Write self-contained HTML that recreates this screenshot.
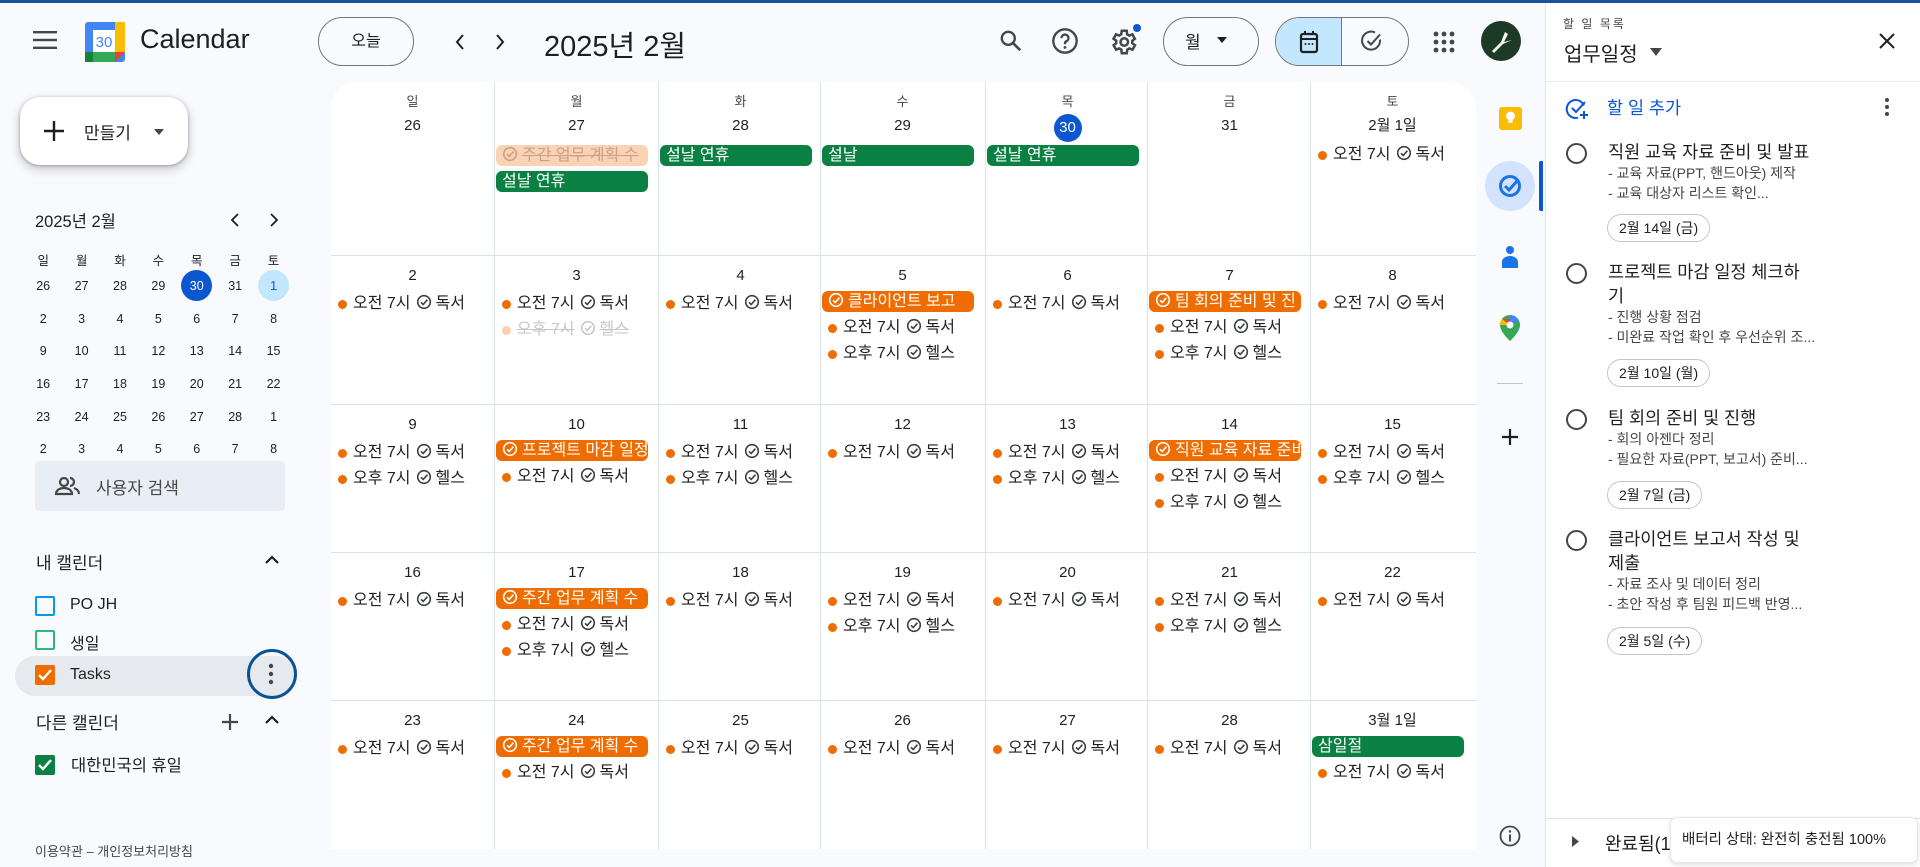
<!DOCTYPE html>
<html><head><meta charset="utf-8">
<style>
*{box-sizing:border-box;margin:0;padding:0}
body{width:1920px;height:867px;overflow:hidden;background:#f8fafd;font-family:"Liberation Sans","Noto Sans CJK KR",sans-serif;color:#1f1f1f;position:relative}
.a{position:absolute}
.topline{left:0;top:0;width:1920px;height:3px;background:#1d5199}
.grid{left:331px;top:82px;width:1145px;height:767px;background:#fff;border-top-left-radius:26px;border-top-right-radius:26px;overflow:hidden}
.vl{position:absolute;top:0;width:1px;height:767px;background:#dde3ea}
.hl{position:absolute;left:0;width:1145px;height:1px;background:#dde3ea}
.cell{position:absolute;width:163px;}
.dn{text-align:center;font-size:15px;height:24px;line-height:24px;color:#1f1f1f;margin-bottom:3px}
.wd{text-align:center;font-size:13px;color:#444746;height:20px;line-height:20px}
.ev{height:26px;line-height:26px;font-size:16px;padding-left:22px;position:relative;white-space:nowrap;color:#1f1f1f}
.ev .dot{position:absolute;left:7px;top:9px;width:9px;height:9px;border-radius:50%;background:#ef6c00}
.ck{width:16px;height:16px;vertical-align:-2px;margin:0 4px 0 5px;fill:none;stroke:#3c4043;stroke-width:1.6}
.ev.f{color:#c8c8c8;text-decoration:line-through}
.ev.f .dot{background:#f9d0b0}
.ev.f .ck{stroke:#c8c8c8}
.chip{height:21px;line-height:21px;margin:2px 10px 3px 1px;border-radius:6px;color:#fff;font-size:16px;padding-left:6px;white-space:nowrap;overflow:hidden}
.chip .ck{stroke:#fff;margin:0 4px 0 0}
.g{background:#0b8043}
.o{background:#ef6c00}
.fc{background:#fad2b4;color:#c9a189;text-decoration:line-through}
.fc .ck{stroke:#c9a189}
.today{display:inline-block;width:28px;height:28px;border-radius:50%;background:#0b57d0;color:#fff;line-height:28px}
.btn{border:1px solid #747775;border-radius:26px;background:transparent}
.task-t{font-size:17.5px;color:#1f1f1f;line-height:24px}
.task-s{font-size:14px;color:#444746;line-height:19.5px}
.tc{border:1px solid #c4c7c5;border-radius:14px;font-size:14px;color:#1f1f1f;height:28px;line-height:26px;padding:0 11px}
.circ{width:21px;height:21px;border:2px solid #444746;border-radius:50%}
</style></head><body>
<div class="a topline"></div>

<svg class="a" style="left:33px;top:31px" width="24" height="18" viewBox="0 0 24 18"><rect y="0" width="24" height="2.4" fill="#444746"/><rect y="7.8" width="24" height="2.4" fill="#444746"/><rect y="15.6" width="24" height="2.4" fill="#444746"/></svg>
<svg class="a" style="left:85px;top:22px" width="40" height="40" viewBox="0 0 40 40">
<rect x="0" y="0" width="40" height="40" rx="3" fill="#4285f4"/>
<rect x="30" y="0" width="10" height="30" fill="#fbbc04"/>
<rect x="0" y="30" width="30" height="10" fill="#34a853"/>
<rect x="0" y="30" width="8" height="10" fill="#188038"/>
<polygon points="30,30 40,30 30,40" fill="#ea4335"/>
<rect x="8" y="8" width="22" height="22" fill="#fff"/>
<text x="19" y="25" font-size="15" text-anchor="middle" fill="#4285f4" font-family="Liberation Sans">30</text></svg>
<div class="a" style="left:140px;top:24px;font-size:27px;color:#1f1f1f">Calendar</div>
<div class="a btn" style="left:318px;top:17px;width:96px;height:49px;text-align:center;line-height:47px;font-size:16px">오늘</div>
<svg class="a" style="left:453px;top:33px" width="14" height="18" viewBox="0 0 14 18"><path d="M10 2L4 9l6 7" fill="none" stroke="#1f1f1f" stroke-width="2"/></svg>
<svg class="a" style="left:493px;top:33px" width="14" height="18" viewBox="0 0 14 18"><path d="M4 2l6 7-6 7" fill="none" stroke="#1f1f1f" stroke-width="2"/></svg>
<div class="a" style="left:544px;top:23px;font-size:29px;color:#1f1f1f">2025년 2월</div>
<svg class="a" style="left:998px;top:28px" width="26" height="26" viewBox="0 0 24 24"><circle cx="9.5" cy="9.5" r="6" fill="none" stroke="#444746" stroke-width="2.2"/><path d="M14 14l6.5 6.5" stroke="#444746" stroke-width="2.4"/></svg>
<svg class="a" style="left:1051px;top:27px" width="28" height="28" viewBox="0 0 24 24"><circle cx="12" cy="12" r="10" fill="none" stroke="#444746" stroke-width="2"/><path d="M9 9.5a3 3 0 1 1 4 2.8c-.8.4-1 1-1 2v.5" fill="none" stroke="#444746" stroke-width="2"/><circle cx="12" cy="17.5" r="1.2" fill="#444746"/></svg>
<svg class="a" style="left:1108px;top:27px" width="30" height="30" viewBox="0 0 24 24"><path d="M19.4 13a7.5 7.5 0 0 0 0-2l2.1-1.6-2-3.5-2.5 1a7 7 0 0 0-1.7-1L15 3h-4l-.4 2.9a7 7 0 0 0-1.7 1l-2.5-1-2 3.5L6.6 11a7.5 7.5 0 0 0 0 2l-2.1 1.6 2 3.5 2.5-1a7 7 0 0 0 1.7 1L11 21h4l.4-2.9a7 7 0 0 0 1.7-1l2.5 1 2-3.5z" fill="none" stroke="#444746" stroke-width="2"/><circle cx="13" cy="12" r="3" fill="none" stroke="#444746" stroke-width="2"/></svg>
<div class="a" style="left:1133px;top:24px;width:8px;height:8px;border-radius:50%;background:#0b57d0"></div>
<div class="a btn" style="left:1163px;top:17px;width:96px;height:49px"></div>
<div class="a" style="left:1185px;top:28px;font-size:17px">월</div>
<svg class="a" style="left:1217px;top:37px" width="10" height="6"><path d="M0 0h10L5 6z" fill="#1f1f1f"/></svg>
<div class="a btn" style="left:1275px;top:17px;width:134px;height:49px;overflow:hidden"><div style="position:absolute;left:0;top:0;width:66px;height:49px;background:#c2e7ff;border-right:1px solid #747775"></div></div>
<svg class="a" style="left:1299px;top:30px" width="20" height="24" viewBox="0 0 20 24"><rect x="2" y="4" width="16" height="18" rx="2" fill="none" stroke="#1f1f1f" stroke-width="2.2"/><rect x="5" y="1" width="2" height="4" fill="#1f1f1f"/><rect x="13" y="1" width="2" height="4" fill="#1f1f1f"/><rect x="2" y="8" width="16" height="2" fill="#1f1f1f"/><circle cx="6.5" cy="14" r="1" fill="#1f1f1f"/><circle cx="10" cy="14" r="1" fill="#1f1f1f"/><circle cx="13.5" cy="14" r="1" fill="#1f1f1f"/></svg>
<svg class="a" style="left:1360px;top:29px" width="24" height="24" viewBox="0 0 24 24"><path d="M20 10.5A9 9 0 1 1 15 3.5" fill="none" stroke="#444746" stroke-width="2"/><path d="M7.5 12l3.5 3.5 9-10" fill="none" stroke="#444746" stroke-width="2"/></svg>
<svg class="a" style="left:1432px;top:30px" width="24" height="24" viewBox="0 0 24 24"><g fill="#444746"><circle cx="4" cy="4" r="2.4"/><circle cx="12" cy="4" r="2.4"/><circle cx="20" cy="4" r="2.4"/><circle cx="4" cy="12" r="2.4"/><circle cx="12" cy="12" r="2.4"/><circle cx="20" cy="12" r="2.4"/><circle cx="4" cy="20" r="2.4"/><circle cx="12" cy="20" r="2.4"/><circle cx="20" cy="20" r="2.4"/></g></svg>
<svg class="a" style="left:1481px;top:21px" width="40" height="40" viewBox="0 0 40 40"><circle cx="20" cy="20" r="20" fill="#1d3a26"/><path d="M11 30l9-9 4-10 3 2-4 8 8-2-9 4-9 9z" fill="#f4f4f0"/></svg>

<!-- left sidebar -->
<div class="a" style="left:20px;top:97px;width:168px;height:68px;background:#fff;border-radius:20px;box-shadow:0 1px 3px rgba(0,0,0,.3),0 4px 8px 3px rgba(0,0,0,.12)"></div>
<svg class="a" style="left:43px;top:120px" width="22" height="22"><path d="M11 1v20M1 11h20" stroke="#1f1f1f" stroke-width="2.4"/></svg>
<div class="a" style="left:84px;top:119px;font-size:17px">만들기</div>
<svg class="a" style="left:154px;top:129px" width="10" height="6"><path d="M0 0h10L5 6z" fill="#444746"/></svg>

<div class="a" style="left:35px;top:208px;font-size:16.5px">2025년 2월</div>
<svg class="a" style="left:230px;top:213px" width="10" height="14"><path d="M8 1L2 7l6 6" fill="none" stroke="#1f1f1f" stroke-width="1.8"/></svg>
<svg class="a" style="left:269px;top:213px" width="10" height="14"><path d="M2 1l6 6-6 6" fill="none" stroke="#1f1f1f" stroke-width="1.8"/></svg>
<div class="a" style="left:181px;top:270px;width:31px;height:31px;border-radius:50%;background:#0b57d0"></div>
<div class="a" style="left:258px;top:270px;width:31px;height:31px;border-radius:50%;background:#c2e7ff"></div>
<div class="a" style="left:24px;top:252px;line-height:0">
<div style="display:grid;grid-template-columns:repeat(7,38.4px);grid-template-rows:18px repeat(6,32.6px);font-size:12.5px;text-align:center;line-height:18px;align-items:center;color:#1f1f1f">
<span>일</span><span>월</span><span>화</span><span>수</span><span>목</span><span>금</span><span>토</span>
<span>26</span><span>27</span><span>28</span><span>29</span><span style="color:#fff">30</span><span>31</span><span style="color:#0b57d0">1</span>
<span>2</span><span>3</span><span>4</span><span>5</span><span>6</span><span>7</span><span>8</span>
<span>9</span><span>10</span><span>11</span><span>12</span><span>13</span><span>14</span><span>15</span>
<span>16</span><span>17</span><span>18</span><span>19</span><span>20</span><span>21</span><span>22</span>
<span>23</span><span>24</span><span>25</span><span>26</span><span>27</span><span>28</span><span>1</span>
<span>2</span><span>3</span><span>4</span><span>5</span><span>6</span><span>7</span><span>8</span>
</div></div>
<div class="a" style="left:35px;top:461px;width:250px;height:50px;background:#e9eef6;border-radius:4px"></div>
<svg class="a" style="left:55px;top:476px" width="26" height="20" viewBox="0 0 26 20"><circle cx="9" cy="6" r="4" fill="none" stroke="#444746" stroke-width="2.2"/><path d="M1 18c0-4 4-6 8-6s8 2 8 6z" fill="none" stroke="#444746" stroke-width="2.2"/><path d="M15 2a4 4 0 0 1 0 8M19 12c3 1 5 3 5 6" fill="none" stroke="#444746" stroke-width="2.2"/></svg>
<div class="a" style="left:96px;top:474px;font-size:17px;color:#444746">사용자 검색</div>

<div class="a" style="left:36px;top:549px;font-size:17px">내 캘린더</div>
<svg class="a" style="left:264px;top:554px" width="16" height="10"><path d="M2 9l6-6 6 6" fill="none" stroke="#1f1f1f" stroke-width="2.2"/></svg>
<div class="a" style="left:35px;top:596px;width:20px;height:20px;border:2px solid #039be5;border-radius:2px"></div>
<div class="a" style="left:70px;top:596px;font-size:16px">PO JH</div>
<div class="a" style="left:35px;top:630px;width:20px;height:20px;border:2px solid #33b679;border-radius:2px"></div>
<div class="a" style="left:70px;top:630px;font-size:16px">생일</div>
<div class="a" style="left:15px;top:656px;width:282px;height:40px;background:#e6e9ee;border-radius:20px"></div>
<div class="a" style="left:35px;top:665px;width:20px;height:20px;background:#ef6c00;border-radius:2px"></div>
<svg class="a" style="left:37px;top:668px" width="16" height="14"><path d="M2 7l4 4 8-9" fill="none" stroke="#fff" stroke-width="2.4"/></svg>
<div class="a" style="left:70px;top:666px;font-size:16px">Tasks</div>
<div class="a" style="left:247px;top:649px;width:50px;height:50px;border:3px solid #0b5394;border-radius:50%"></div>
<svg class="a" style="left:268px;top:663px" width="6" height="22"><circle cx="3" cy="3" r="2.2" fill="#444746"/><circle cx="3" cy="11" r="2.2" fill="#444746"/><circle cx="3" cy="19" r="2.2" fill="#444746"/></svg>
<div class="a" style="left:36px;top:709px;font-size:17px">다른 캘린더</div>
<svg class="a" style="left:221px;top:713px" width="18" height="18"><path d="M9 1v16M1 9h16" stroke="#444746" stroke-width="2.2"/></svg>
<svg class="a" style="left:264px;top:714px" width="16" height="10"><path d="M2 9l6-6 6 6" fill="none" stroke="#1f1f1f" stroke-width="2.2"/></svg>
<div class="a" style="left:35px;top:755px;width:20px;height:20px;background:#0b8043;border-radius:2px"></div>
<svg class="a" style="left:37px;top:758px" width="16" height="14"><path d="M2 7l4 4 8-9" fill="none" stroke="#fff" stroke-width="2.4"/></svg>
<div class="a" style="left:71px;top:752px;font-size:16.5px">대한민국의 휴일</div>
<div class="a" style="left:35px;top:841px;font-size:13px;color:#444746">이용약관 – 개인정보처리방침</div>

<!-- grid -->
<div class="a grid">
<div class="vl" style="left:163px"></div><div class="vl" style="left:327px"></div><div class="vl" style="left:489px"></div><div class="vl" style="left:654px"></div><div class="vl" style="left:816px"></div><div class="vl" style="left:979px"></div>
<div class="hl" style="top:173px"></div><div class="hl" style="top:322px"></div><div class="hl" style="top:470px"></div><div class="hl" style="top:618px"></div>

<!-- row1 -->
<div class="cell" style="left:0;top:10px"><div class="wd">일</div><div class="dn" style="margin-top:2px">26</div></div>
<div class="cell" style="left:164px;top:10px"><div class="wd">월</div><div class="dn" style="margin-top:2px;margin-bottom:0">27</div>
<div class="chip fc" style="margin-top:7px"><svg class="ck" viewBox="0 0 16 16"><circle cx="8" cy="8" r="6.3"/><path d="M5 8.3l2.2 2.2 4.2-4.8"/></svg>주간 업무 계획 수</div>
<div class="chip g" style="margin-top:5px">설날 연휴</div></div>
<div class="cell" style="left:328px;top:10px"><div class="wd">화</div><div class="dn" style="margin-top:2px;margin-bottom:0">28</div>
<div class="chip g" style="margin-top:7px">설날 연휴</div></div>
<div class="cell" style="left:490px;top:10px"><div class="wd">수</div><div class="dn" style="margin-top:2px;margin-bottom:0">29</div>
<div class="chip g" style="margin-top:7px">설날</div></div>
<div class="cell" style="left:655px;top:10px"><div class="wd">목</div><div class="dn" style="margin-top:2px;margin-bottom:0"><span class="today">30</span></div>
<div class="chip g" style="margin-top:7px">설날 연휴</div></div>
<div class="cell" style="left:817px;top:10px"><div class="wd">금</div><div class="dn" style="margin-top:2px">31</div></div>
<div class="cell" style="left:980px;top:10px"><div class="wd">토</div><div class="dn" style="margin-top:2px;margin-bottom:0">2월 1일</div>
<div class="ev" style="margin-top:4px"><i class="dot"></i>오전 7시<svg class="ck" viewBox="0 0 16 16"><circle cx="8" cy="8" r="6.3"/><path d="M5 8.3l2.2 2.2 4.2-4.8"/></svg>독서</div></div>

<!-- row2 -->
<div class="cell" style="left:0;top:182px"><div class="dn">2</div><div class="ev"><i class="dot"></i>오전 7시<svg class="ck" viewBox="0 0 16 16"><circle cx="8" cy="8" r="6.3"/><path d="M5 8.3l2.2 2.2 4.2-4.8"/></svg>독서</div></div>
<div class="cell" style="left:164px;top:182px"><div class="dn">3</div><div class="ev"><i class="dot"></i>오전 7시<svg class="ck" viewBox="0 0 16 16"><circle cx="8" cy="8" r="6.3"/><path d="M5 8.3l2.2 2.2 4.2-4.8"/></svg>독서</div><div class="ev f"><i class="dot"></i>오후 7시<svg class="ck" viewBox="0 0 16 16"><circle cx="8" cy="8" r="6.3"/><path d="M5 8.3l2.2 2.2 4.2-4.8"/></svg>헬스</div></div>
<div class="cell" style="left:328px;top:182px"><div class="dn">4</div><div class="ev"><i class="dot"></i>오전 7시<svg class="ck" viewBox="0 0 16 16"><circle cx="8" cy="8" r="6.3"/><path d="M5 8.3l2.2 2.2 4.2-4.8"/></svg>독서</div></div>
<div class="cell" style="left:490px;top:182px"><div class="dn">5</div><div class="chip o"><svg class="ck" viewBox="0 0 16 16"><circle cx="8" cy="8" r="6.3"/><path d="M5 8.3l2.2 2.2 4.2-4.8"/></svg>클라이언트 보고</div><div class="ev"><i class="dot"></i>오전 7시<svg class="ck" viewBox="0 0 16 16"><circle cx="8" cy="8" r="6.3"/><path d="M5 8.3l2.2 2.2 4.2-4.8"/></svg>독서</div><div class="ev"><i class="dot"></i>오후 7시<svg class="ck" viewBox="0 0 16 16"><circle cx="8" cy="8" r="6.3"/><path d="M5 8.3l2.2 2.2 4.2-4.8"/></svg>헬스</div></div>
<div class="cell" style="left:655px;top:182px"><div class="dn">6</div><div class="ev"><i class="dot"></i>오전 7시<svg class="ck" viewBox="0 0 16 16"><circle cx="8" cy="8" r="6.3"/><path d="M5 8.3l2.2 2.2 4.2-4.8"/></svg>독서</div></div>
<div class="cell" style="left:817px;top:182px"><div class="dn">7</div><div class="chip o"><svg class="ck" viewBox="0 0 16 16"><circle cx="8" cy="8" r="6.3"/><path d="M5 8.3l2.2 2.2 4.2-4.8"/></svg>팀 회의 준비 및 진</div><div class="ev"><i class="dot"></i>오전 7시<svg class="ck" viewBox="0 0 16 16"><circle cx="8" cy="8" r="6.3"/><path d="M5 8.3l2.2 2.2 4.2-4.8"/></svg>독서</div><div class="ev"><i class="dot"></i>오후 7시<svg class="ck" viewBox="0 0 16 16"><circle cx="8" cy="8" r="6.3"/><path d="M5 8.3l2.2 2.2 4.2-4.8"/></svg>헬스</div></div>
<div class="cell" style="left:980px;top:182px"><div class="dn">8</div><div class="ev"><i class="dot"></i>오전 7시<svg class="ck" viewBox="0 0 16 16"><circle cx="8" cy="8" r="6.3"/><path d="M5 8.3l2.2 2.2 4.2-4.8"/></svg>독서</div></div>

<!-- row3 -->
<div class="cell" style="left:0;top:331px"><div class="dn">9</div><div class="ev"><i class="dot"></i>오전 7시<svg class="ck" viewBox="0 0 16 16"><circle cx="8" cy="8" r="6.3"/><path d="M5 8.3l2.2 2.2 4.2-4.8"/></svg>독서</div><div class="ev"><i class="dot"></i>오후 7시<svg class="ck" viewBox="0 0 16 16"><circle cx="8" cy="8" r="6.3"/><path d="M5 8.3l2.2 2.2 4.2-4.8"/></svg>헬스</div></div>
<div class="cell" style="left:164px;top:331px"><div class="dn">10</div><div class="chip o"><svg class="ck" viewBox="0 0 16 16"><circle cx="8" cy="8" r="6.3"/><path d="M5 8.3l2.2 2.2 4.2-4.8"/></svg>프로젝트 마감 일정</div><div class="ev"><i class="dot"></i>오전 7시<svg class="ck" viewBox="0 0 16 16"><circle cx="8" cy="8" r="6.3"/><path d="M5 8.3l2.2 2.2 4.2-4.8"/></svg>독서</div></div>
<div class="cell" style="left:328px;top:331px"><div class="dn">11</div><div class="ev"><i class="dot"></i>오전 7시<svg class="ck" viewBox="0 0 16 16"><circle cx="8" cy="8" r="6.3"/><path d="M5 8.3l2.2 2.2 4.2-4.8"/></svg>독서</div><div class="ev"><i class="dot"></i>오후 7시<svg class="ck" viewBox="0 0 16 16"><circle cx="8" cy="8" r="6.3"/><path d="M5 8.3l2.2 2.2 4.2-4.8"/></svg>헬스</div></div>
<div class="cell" style="left:490px;top:331px"><div class="dn">12</div><div class="ev"><i class="dot"></i>오전 7시<svg class="ck" viewBox="0 0 16 16"><circle cx="8" cy="8" r="6.3"/><path d="M5 8.3l2.2 2.2 4.2-4.8"/></svg>독서</div></div>
<div class="cell" style="left:655px;top:331px"><div class="dn">13</div><div class="ev"><i class="dot"></i>오전 7시<svg class="ck" viewBox="0 0 16 16"><circle cx="8" cy="8" r="6.3"/><path d="M5 8.3l2.2 2.2 4.2-4.8"/></svg>독서</div><div class="ev"><i class="dot"></i>오후 7시<svg class="ck" viewBox="0 0 16 16"><circle cx="8" cy="8" r="6.3"/><path d="M5 8.3l2.2 2.2 4.2-4.8"/></svg>헬스</div></div>
<div class="cell" style="left:817px;top:331px"><div class="dn">14</div><div class="chip o"><svg class="ck" viewBox="0 0 16 16"><circle cx="8" cy="8" r="6.3"/><path d="M5 8.3l2.2 2.2 4.2-4.8"/></svg>직원 교육 자료 준비</div><div class="ev"><i class="dot"></i>오전 7시<svg class="ck" viewBox="0 0 16 16"><circle cx="8" cy="8" r="6.3"/><path d="M5 8.3l2.2 2.2 4.2-4.8"/></svg>독서</div><div class="ev"><i class="dot"></i>오후 7시<svg class="ck" viewBox="0 0 16 16"><circle cx="8" cy="8" r="6.3"/><path d="M5 8.3l2.2 2.2 4.2-4.8"/></svg>헬스</div></div>
<div class="cell" style="left:980px;top:331px"><div class="dn">15</div><div class="ev"><i class="dot"></i>오전 7시<svg class="ck" viewBox="0 0 16 16"><circle cx="8" cy="8" r="6.3"/><path d="M5 8.3l2.2 2.2 4.2-4.8"/></svg>독서</div><div class="ev"><i class="dot"></i>오후 7시<svg class="ck" viewBox="0 0 16 16"><circle cx="8" cy="8" r="6.3"/><path d="M5 8.3l2.2 2.2 4.2-4.8"/></svg>헬스</div></div>

<!-- row4 -->
<div class="cell" style="left:0;top:479px"><div class="dn">16</div><div class="ev"><i class="dot"></i>오전 7시<svg class="ck" viewBox="0 0 16 16"><circle cx="8" cy="8" r="6.3"/><path d="M5 8.3l2.2 2.2 4.2-4.8"/></svg>독서</div></div>
<div class="cell" style="left:164px;top:479px"><div class="dn">17</div><div class="chip o"><svg class="ck" viewBox="0 0 16 16"><circle cx="8" cy="8" r="6.3"/><path d="M5 8.3l2.2 2.2 4.2-4.8"/></svg>주간 업무 계획 수</div><div class="ev"><i class="dot"></i>오전 7시<svg class="ck" viewBox="0 0 16 16"><circle cx="8" cy="8" r="6.3"/><path d="M5 8.3l2.2 2.2 4.2-4.8"/></svg>독서</div><div class="ev"><i class="dot"></i>오후 7시<svg class="ck" viewBox="0 0 16 16"><circle cx="8" cy="8" r="6.3"/><path d="M5 8.3l2.2 2.2 4.2-4.8"/></svg>헬스</div></div>
<div class="cell" style="left:328px;top:479px"><div class="dn">18</div><div class="ev"><i class="dot"></i>오전 7시<svg class="ck" viewBox="0 0 16 16"><circle cx="8" cy="8" r="6.3"/><path d="M5 8.3l2.2 2.2 4.2-4.8"/></svg>독서</div></div>
<div class="cell" style="left:490px;top:479px"><div class="dn">19</div><div class="ev"><i class="dot"></i>오전 7시<svg class="ck" viewBox="0 0 16 16"><circle cx="8" cy="8" r="6.3"/><path d="M5 8.3l2.2 2.2 4.2-4.8"/></svg>독서</div><div class="ev"><i class="dot"></i>오후 7시<svg class="ck" viewBox="0 0 16 16"><circle cx="8" cy="8" r="6.3"/><path d="M5 8.3l2.2 2.2 4.2-4.8"/></svg>헬스</div></div>
<div class="cell" style="left:655px;top:479px"><div class="dn">20</div><div class="ev"><i class="dot"></i>오전 7시<svg class="ck" viewBox="0 0 16 16"><circle cx="8" cy="8" r="6.3"/><path d="M5 8.3l2.2 2.2 4.2-4.8"/></svg>독서</div></div>
<div class="cell" style="left:817px;top:479px"><div class="dn">21</div><div class="ev"><i class="dot"></i>오전 7시<svg class="ck" viewBox="0 0 16 16"><circle cx="8" cy="8" r="6.3"/><path d="M5 8.3l2.2 2.2 4.2-4.8"/></svg>독서</div><div class="ev"><i class="dot"></i>오후 7시<svg class="ck" viewBox="0 0 16 16"><circle cx="8" cy="8" r="6.3"/><path d="M5 8.3l2.2 2.2 4.2-4.8"/></svg>헬스</div></div>
<div class="cell" style="left:980px;top:479px"><div class="dn">22</div><div class="ev"><i class="dot"></i>오전 7시<svg class="ck" viewBox="0 0 16 16"><circle cx="8" cy="8" r="6.3"/><path d="M5 8.3l2.2 2.2 4.2-4.8"/></svg>독서</div></div>

<!-- row5 -->
<div class="cell" style="left:0;top:627px"><div class="dn">23</div><div class="ev"><i class="dot"></i>오전 7시<svg class="ck" viewBox="0 0 16 16"><circle cx="8" cy="8" r="6.3"/><path d="M5 8.3l2.2 2.2 4.2-4.8"/></svg>독서</div></div>
<div class="cell" style="left:164px;top:627px"><div class="dn">24</div><div class="chip o"><svg class="ck" viewBox="0 0 16 16"><circle cx="8" cy="8" r="6.3"/><path d="M5 8.3l2.2 2.2 4.2-4.8"/></svg>주간 업무 계획 수</div><div class="ev"><i class="dot"></i>오전 7시<svg class="ck" viewBox="0 0 16 16"><circle cx="8" cy="8" r="6.3"/><path d="M5 8.3l2.2 2.2 4.2-4.8"/></svg>독서</div></div>
<div class="cell" style="left:328px;top:627px"><div class="dn">25</div><div class="ev"><i class="dot"></i>오전 7시<svg class="ck" viewBox="0 0 16 16"><circle cx="8" cy="8" r="6.3"/><path d="M5 8.3l2.2 2.2 4.2-4.8"/></svg>독서</div></div>
<div class="cell" style="left:490px;top:627px"><div class="dn">26</div><div class="ev"><i class="dot"></i>오전 7시<svg class="ck" viewBox="0 0 16 16"><circle cx="8" cy="8" r="6.3"/><path d="M5 8.3l2.2 2.2 4.2-4.8"/></svg>독서</div></div>
<div class="cell" style="left:655px;top:627px"><div class="dn">27</div><div class="ev"><i class="dot"></i>오전 7시<svg class="ck" viewBox="0 0 16 16"><circle cx="8" cy="8" r="6.3"/><path d="M5 8.3l2.2 2.2 4.2-4.8"/></svg>독서</div></div>
<div class="cell" style="left:817px;top:627px"><div class="dn">28</div><div class="ev"><i class="dot"></i>오전 7시<svg class="ck" viewBox="0 0 16 16"><circle cx="8" cy="8" r="6.3"/><path d="M5 8.3l2.2 2.2 4.2-4.8"/></svg>독서</div></div>
<div class="cell" style="left:980px;top:627px"><div class="dn">3월 1일</div><div class="chip g">삼일절</div><div class="ev"><i class="dot"></i>오전 7시<svg class="ck" viewBox="0 0 16 16"><circle cx="8" cy="8" r="6.3"/><path d="M5 8.3l2.2 2.2 4.2-4.8"/></svg>독서</div></div>
</div>

<!-- side icon rail -->
<div class="a" style="left:1499px;top:107px;width:23px;height:23px;background:#fbbc04;border-radius:3px"></div>
<svg class="a" style="left:1504px;top:110px" width="13" height="17" viewBox="0 0 13 17"><circle cx="6.5" cy="6" r="4.5" fill="#fff"/><rect x="4.5" y="10" width="4" height="3" fill="#fff"/></svg>
<div class="a" style="left:1485px;top:161px;width:50px;height:50px;border-radius:50%;background:#d3e3fd"></div>
<svg class="a" style="left:1498px;top:174px" width="24" height="24" viewBox="0 0 24 24"><circle cx="12" cy="12" r="9.5" fill="none" stroke="#1a73e8" stroke-width="3"/><path d="M7 12l4 4 9-10" fill="none" stroke="#1a73e8" stroke-width="3"/></svg>
<div class="a" style="left:1539px;top:161px;width:4px;height:50px;background:#0b57d0;border-radius:2px 0 0 2px"></div>
<svg class="a" style="left:1501px;top:245px" width="18" height="24" viewBox="0 0 18 24"><circle cx="9" cy="5" r="4" fill="#1a73e8"/><path d="M1 23v-6a8 6 0 0 1 16 0v6z" fill="#1a73e8"/></svg>
<svg class="a" style="left:1499px;top:314px" width="22" height="28" viewBox="0 0 22 28"><path d="M11 1a10 10 0 0 0-10 10c0 7 10 16 10 16s10-9 10-16A10 10 0 0 0 11 1z" fill="#34a853"/><path d="M3 5l8 6 8-6" fill="#ea4335"/><path d="M11 1a10 10 0 0 1 9 6l-9 4z" fill="#4285f4"/><path d="M1 11a10 10 0 0 1 2-6l8 6z" fill="#fbbc04"/><circle cx="11" cy="11" r="3.5" fill="#fff"/></svg>
<div class="a" style="left:1497px;top:383px;width:26px;height:1px;background:#c4c7c5"></div>
<svg class="a" style="left:1501px;top:428px" width="18" height="18"><path d="M9 1v16M1 9h16" stroke="#1f1f1f" stroke-width="2.2"/></svg>
<svg class="a" style="left:1499px;top:825px" width="22" height="22" viewBox="0 0 22 22"><circle cx="11" cy="11" r="9.5" fill="none" stroke="#444746" stroke-width="1.8"/><rect x="10" y="9.5" width="2" height="7" fill="#444746"/><circle cx="11" cy="6.5" r="1.2" fill="#444746"/></svg>

<!-- right panel -->
<div class="a" style="left:1545px;top:3px;width:375px;height:864px;background:#fff;border-left:1px solid #e3e3e3"></div>
<div class="a" style="left:1563px;top:15px;font-size:12px;color:#444746;letter-spacing:2px">할 일 목록</div>
<div class="a" style="left:1564px;top:38px;font-size:20px">업무일정</div>
<svg class="a" style="left:1650px;top:48px" width="12" height="8"><path d="M0 0h12L6 8z" fill="#444746"/></svg>
<svg class="a" style="left:1878px;top:32px" width="18" height="18"><path d="M2 2l14 14M16 2L2 16" stroke="#1f1f1f" stroke-width="2"/></svg>
<div class="a" style="left:1545px;top:81px;width:375px;height:1px;background:#e8eaed"></div>
<svg class="a" style="left:1565px;top:97px" width="24" height="24" viewBox="0 0 24 24"><path d="M19 8.5A9 9 0 1 0 13 20.7" fill="none" stroke="#0b57d0" stroke-width="2"/><path d="M7 11l4 4 9-10" fill="none" stroke="#0b57d0" stroke-width="2"/><path d="M19 14v8M15 18h8" stroke="#0b57d0" stroke-width="2"/></svg>
<div class="a" style="left:1607px;top:95px;font-size:17.5px;color:#0b57d0">할 일 추가</div>
<svg class="a" style="left:1884px;top:97px" width="6" height="20"><circle cx="3" cy="3" r="2" fill="#444746"/><circle cx="3" cy="10" r="2" fill="#444746"/><circle cx="3" cy="17" r="2" fill="#444746"/></svg>

<div class="a circ" style="left:1566px;top:143px"></div>
<div class="a" style="left:1608px;top:140px;width:240px"><div class="task-t">직원 교육 자료 준비 및 발표</div><div class="task-s">- 교육 자료(PPT, 핸드아웃) 제작</div><div class="task-s">- 교육 대상자 리스트 확인...</div></div>
<div class="a tc" style="left:1607px;top:214px">2월 14일 (금)</div>

<div class="a circ" style="left:1566px;top:263px"></div>
<div class="a" style="left:1608px;top:260px;width:240px"><div class="task-t">프로젝트 마감 일정 체크하</div><div class="task-t">기</div><div class="task-s">- 진행 상황 점검</div><div class="task-s">- 미완료 작업 확인 후 우선순위 조...</div></div>
<div class="a tc" style="left:1607px;top:359px">2월 10일 (월)</div>

<div class="a circ" style="left:1566px;top:409px"></div>
<div class="a" style="left:1608px;top:406px;width:240px"><div class="task-t">팀 회의 준비 및 진행</div><div class="task-s">- 회의 아젠다 정리</div><div class="task-s">- 필요한 자료(PPT, 보고서) 준비...</div></div>
<div class="a tc" style="left:1607px;top:481px">2월 7일 (금)</div>

<div class="a circ" style="left:1566px;top:530px"></div>
<div class="a" style="left:1608px;top:527px;width:240px"><div class="task-t">클라이언트 보고서 작성 및</div><div class="task-t">제출</div><div class="task-s">- 자료 조사 및 데이터 정리</div><div class="task-s">- 초안 작성 후 팀원 피드백 반영...</div></div>
<div class="a tc" style="left:1607px;top:627px">2월 5일 (수)</div>

<div class="a" style="left:1545px;top:818px;width:375px;height:1px;background:#e3e3e3"></div>
<svg class="a" style="left:1572px;top:836px" width="7" height="11"><path d="M0 0l7 5.5L0 11z" fill="#444746"/></svg>
<div class="a" style="left:1605px;top:830px;font-size:18px;color:#1f1f1f">완료됨(1)</div>
<div class="a" style="left:1670px;top:817px;width:248px;height:46px;background:#fff;border:1px solid #e6e6e6;border-radius:7px;box-shadow:0 2px 5px rgba(0,0,0,.12);font-size:14.5px;line-height:44px;padding-left:11px;color:#1f1f1f">배터리 상태: 완전히 충전됨 100%</div>
</body></html>
